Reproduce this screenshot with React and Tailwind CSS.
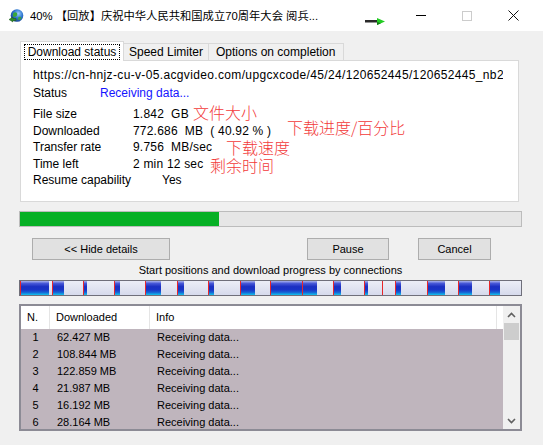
import React from "react";

const SEGS = [
  [20, 49], [52, 64], [83, 87], [114, 120], [145, 161], [177, 184], [208, 214],
  [240, 255], [270, 302], [302, 317], [333, 341], [364, 368], [382, 382],
  [395, 401], [427, 445], [458, 472], [489, 500],
];
const BAR_END = 521;

const ROWS = [
  ["1", "62.427 MB"],
  ["2", "108.844 MB"],
  ["3", "122.859 MB"],
  ["4", "21.987 MB"],
  ["5", "16.192 MB"],
  ["6", "28.164 MB"],
];

function IdmIcon() {
  return (
    <svg width="16" height="16" viewBox="0 0 16 16">
      <defs>
        <radialGradient id="gl" cx="0.6" cy="0.35" r="0.7">
          <stop offset="0" stopColor="#9fd0ff" />
          <stop offset="0.5" stopColor="#2f78d0" />
          <stop offset="1" stopColor="#163f8c" />
        </radialGradient>
      </defs>
      <circle cx="9" cy="7.5" r="6.3" fill="url(#gl)" />
      <path d="M5 5.5 Q7 3.5 9 5 Q10 7 8 8.5 Q6 9.5 5 8 Z" fill="#3aa63a" />
      <path d="M10.5 9 Q12.5 8 13.5 10 Q12 12.5 10 12 Z" fill="#3aa63a" />
      <path d="M1 11.5 L5 9 L5 10.5 L8 10.5 L8 12.5 L5 12.5 L5 14 Z" fill="#2f8a2a" stroke="#1d5a1a" strokeWidth="0.5" />
    </svg>
  );
}

function Chevron({ down }) {
  return (
    <svg width="9" height="6" viewBox="0 0 9 6">
      <path
        d={down ? "M1 1 L4.5 4.5 L8 1" : "M1 5 L4.5 1.5 L8 5"}
        fill="none"
        stroke="#606060"
        strokeWidth="1.6"
      />
    </svg>
  );
}

function ConnBar() {
  const starts = SEGS.map((s) => s[0]);
  return (
    <div className="mt-[3px] ml-[19px] w-[503px] h-[16px] border border-[#6f6f7a] flex overflow-hidden">
      {SEGS.map(([s, b], i) => {
        const next = i + 1 < starts.length ? starts[i + 1] : BAR_END;
        const blue = b - s;
        const light = next - b;
        return (
          <div key={i} className="flex h-full" style={{ width: next - s }}>
            {blue > 0 && (
              <div
                className="h-full border-l border-[#e8262a] bg-[linear-gradient(to_bottom,#aab2ee_0%,#4656d6_18%,#1c30c2_40%,#1a34c6_62%,#1660d4_80%,#12c4ec_100%)]"
                style={{ width: blue }}
              />
            )}
            {light > 0 && (
              <div
                className={
                  "h-full bg-[linear-gradient(to_bottom,#eceef7_0%,#dfe2f0_60%,#d6daec_100%)] " +
                  (blue > 0 ? "" : "border-l border-[#e8262a]")
                }
                style={{ width: light }}
              />
            )}
          </div>
        );
      })}
    </div>
  );
}

export default function App() {
  const sans = "font-['Liberation_Sans','Noto_Sans_CJK_SC',sans-serif]";
  const red = "absolute text-[16px] leading-[15px] text-[#f23a3a] font-['Noto_Sans_CJK_SC',sans-serif] font-light whitespace-nowrap";
  return (
    <div className={"w-[543px] h-[445px] bg-[#f0f0f0] overflow-hidden flex flex-col text-black " + sans}>
      {/* Title bar */}
      <div className="h-[31px] shrink-0 bg-white flex items-center">
        <div className="w-[8px]" />
        <IdmIcon />
        <div className="ml-[6px] w-[335px] text-[11.3px] leading-[16px] whitespace-nowrap overflow-hidden">
          40% 【回放】庆祝中华人民共和国成立70周年大会 阅兵...
        </div>
        <svg width="20" height="8" viewBox="0 0 20 8" className="mt-[12px]">
          <rect x="0" y="2" width="13" height="2.5" fill="#2a2a2a" />
          <path d="M12 0 L20 3.5 L12 7 Z" fill="#22cc22" />
          <path d="M12 4 L16 5.3 L12 7 Z" fill="#137a13" />
        </svg>
        <div className="w-[13px]" />
        <div className="w-[46px] h-[31px] flex items-center justify-center">
          <div className="w-[10px] h-px bg-black" />
        </div>
        <div className="w-[46px] h-[31px] flex items-center justify-center">
          <div className="w-[10px] h-[10px] border border-[#cccccc]" />
        </div>
        <div className="w-[46px] h-[31px] flex items-center justify-center">
          <svg width="11" height="11" viewBox="0 0 11 11">
            <path d="M0.5 0.5 L10.5 10.5 M10.5 0.5 L0.5 10.5" stroke="#111" strokeWidth="1" />
          </svg>
        </div>
      </div>

      {/* Tabs */}
      <div className="mt-[10px] ml-[20px] h-[20px] flex items-end relative z-10 text-[12px]">
        <div className="w-[104px] h-[20px] bg-white border-t border-l border-r border-[#d9d9d9] flex items-center justify-center">
          <div className="border border-dotted border-black px-[3px] h-[16px] leading-[14px]">Download status</div>
        </div>
        <div className="w-[85px] h-[17px] mb-px border-t border-r border-[#d9d9d9] bg-[#f0f0f0] pl-[5px] leading-[16px]">
          Speed Limiter
        </div>
        <div className="w-[135px] h-[17px] mb-px border-t border-r border-[#d9d9d9] bg-[#f0f0f0] pl-[7px] leading-[16px]">
          Options on completion
        </div>
      </div>

      {/* Status panel */}
      <div className="-mt-px ml-[20px] w-[499px] h-[142px] shrink-0 bg-white border border-[#d9d9d9] relative text-[12px] pl-[12px] pt-[6px]">
        <div className="h-[17px] leading-[17px] whitespace-nowrap overflow-hidden w-[470px] tracking-[0.35px]">
          https://cn-hnjz-cu-v-05.acgvideo.com/upgcxcode/45/24/120652445/120652445_nb2
        </div>
        <div className="mt-[1px] h-[17px] leading-[17px] flex">
          <div className="w-[67px]">Status</div>
          <div className="text-[#1414ff]">Receiving data...</div>
        </div>
        <div className="mt-[4px] flex flex-col">
          {[
            ["File size", "1.842  GB"],
            ["Downloaded", "772.686  MB  ( 40.92 % )"],
            ["Transfer rate", "9.756  MB/sec"],
            ["Time left", "2 min 12 sec"],
          ].map(([k, v]) => (
            <div key={k} className="h-[16.5px] leading-[16.5px] flex">
              <div className="w-[100px]">{k}</div>
              <div className="whitespace-pre tracking-[0.2px]">{v}</div>
            </div>
          ))}
          <div className="h-[16.5px] leading-[16.5px] flex">
            <div className="w-[129px]">Resume capability</div>
            <div>Yes</div>
          </div>
        </div>

        {/* red annotations painted over the screenshot */}
        <div className={red + " left-[172px] top-[44px]"}>文件大小</div>
        <div className={red + " left-[266px] top-[59px]"}>下载进度/百分比</div>
        <div className={red + " left-[205px] top-[79px]"}>下载速度</div>
        <div className={red + " left-[189px] top-[97px]"}>剩余时间</div>
      </div>

      {/* Overall progress */}
      <div className="mt-[9px] ml-[19px] w-[503px] h-[16px] shrink-0 border border-[#bcbcbc] bg-[#e6e6e6]">
        <div className="w-[199px] h-full bg-[#06b025]" />
      </div>

      {/* Buttons */}
      <div className="mt-[11px] h-[22px] shrink-0 flex text-[11px]">
        <div className="ml-[32px] w-[138px] h-[22px] bg-[#e1e1e1] border border-[#adadad] flex items-center justify-center">
          &lt;&lt; Hide details
        </div>
        <div className="ml-[137px] w-[82px] h-[22px] bg-[#e1e1e1] border border-[#adadad] flex items-center justify-center">
          Pause
        </div>
        <div className="ml-[29px] w-[73px] h-[22px] bg-[#e1e1e1] border border-[#adadad] flex items-center justify-center">
          Cancel
        </div>
      </div>

      <div className="mt-[3px] ml-[19px] w-[503px] h-[14px] shrink-0 text-center text-[11px] leading-[14px]">
        Start positions and download progress by connections
      </div>

      <ConnBar />

      {/* Connections list */}
      <div className="mt-[8px] ml-[19px] w-[503px] h-[127px] shrink-0 border-2 border-[#8c8b95] flex overflow-hidden text-[11px]">
        <div className="w-[482px] flex flex-col">
          <div className="h-[23px] shrink-0 bg-white flex leading-[23px]">
            <div className="w-[29px] pl-[6px] border-r border-[#e5e5e5]">N.</div>
            <div className="w-[100px] pl-[6px] border-r border-[#e5e5e5]">Downloaded</div>
            <div className="w-[347px] pl-[6px] border-r border-[#e5e5e5]">Info</div>
            <div className="flex-1" />
          </div>
          <div className="flex-1 bg-[#bfb5bd]">
            {ROWS.map(([n, d]) => (
              <div key={n} className="h-[17px] leading-[17px] flex">
                <div className="w-[29px] text-center">{n}</div>
                <div className="w-[100px] pl-[7px]">{d}</div>
                <div className="pl-[7px]">Receiving data...</div>
              </div>
            ))}
          </div>
        </div>
        <div className="w-[17px] bg-[#f0f0f0] flex flex-col items-center">
          <div className="h-[17px] w-full flex items-center justify-center">
            <Chevron />
          </div>
          <div className="w-[15px] h-[17px] bg-[#cdcdcd]" />
          <div className="flex-1" />
          <div className="h-[17px] w-full flex items-center justify-center">
            <Chevron down />
          </div>
        </div>
      </div>
    </div>
  );
}
